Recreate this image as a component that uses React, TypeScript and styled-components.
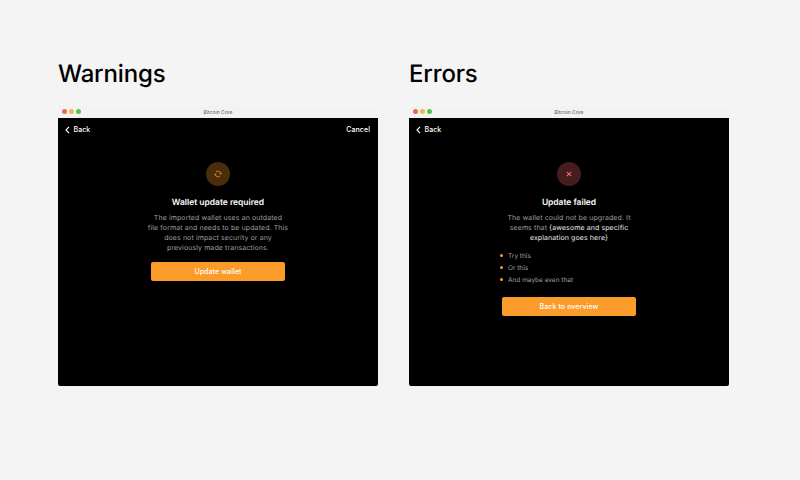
import React from "react";
import styled, { createGlobalStyle } from "styled-components";

const GlobalStyle = createGlobalStyle`
  * { box-sizing: border-box; }
  body {
    margin: 0;
    background: #f4f4f4;
    font-family: Inter, sans-serif;
    text-rendering: geometricPrecision;
    -webkit-font-smoothing: antialiased;
  }
`;
const Page = styled.main`
  display: flex;
  gap: 31px;
  width: 800px;
  height: 480px;
  padding: 59px 0 0 58px;
  background: #f4f4f4;
`;
const Column = styled.section`
  width: 320px;
`;
const Heading = styled.h1`
  margin: 0 0 17px;
  height: 30px;
  font-size: 24px;
  line-height: 30px;
  font-weight: 500;
  letter-spacing: -0.16px;
  color: #000;
`;
const Window = styled.div`
  height: 280px;
  display: flex;
  flex-direction: column;
  color: #fff;
`;
const Screen = styled.div`
  flex: 1;
  border-radius: 0 0 2px 2px;
  background: #000;
`;
const TitleBar = styled.div`
  display: grid;
  grid-template-columns: 1fr auto 1fr;
  align-items: center;
  height: 12px;
  padding: 0 4px;
  border-radius: 2px 2px 0 0;
  background: #f1f3f2;
  font-size: 5px;
  line-height: 6px;
  color: #4a4a4a;
`;
const WindowName = styled.span`
  padding-top: 1px;
`;
const Lights = styled.div`
  display: flex;
  gap: 2.2px;
  padding-bottom: 0.4px;
`;
const Light = styled.span<{ $color: string }>`
  width: 5px;
  height: 5px;
  border-radius: 50%;
  background: ${(p) => p.$color};
`;
const Nav = styled.nav`
  display: flex;
  justify-content: space-between;
  align-items: center;
  height: 24px;
  padding: 0 8px 0 7px;
`;
const NavButton = styled.button`
  display: flex;
  align-items: center;
  gap: 3.5px;
  padding: 0;
  border: 0;
  background: none;
  color: #fff;
  font: 500 7px/10px Inter, sans-serif;
  letter-spacing: 0.08px;
`;
const Content = styled.div`
  display: flex;
  flex-direction: column;
  align-items: center;
  padding-top: 20px;
`;
const Badge = styled.div<{ $color: string }>`
  display: flex;
  align-items: center;
  justify-content: center;
  width: 24px;
  height: 24px;
  border-radius: 50%;
  background: ${(p) => p.$color};
`;
const Title = styled.h2`
  margin: 11px 0 4px;
  font-size: 8.45px;
  line-height: 12px;
  font-weight: 600;
`;
const Copy = styled.p`
  margin: 0;
  font-size: 7px;
  line-height: 10px;
  letter-spacing: 0.1px;
  text-align: center;
  color: #9e9e9e;
  white-space: nowrap;
`;
const Strong = styled.span`
  color: #ececec;
`;
const Tips = styled.ul`
  width: 138px;
  margin: 7px 0 0;
  padding: 0;
  list-style: none;
`;
const Tip = styled.li`
  display: flex;
  align-items: center;
  gap: 5px;
  height: 12px;
  font-size: 6.5px;
  color: #9e9e9e;
  &::before {
    content: "";
    width: 3px;
    height: 3px;
    margin-top: -1px;
    border-radius: 50%;
    background: #fa9b2a;
  }
`;
const Action = styled.button<{ $top: number }>`
  width: 134px;
  height: 19px;
  margin-top: ${(p) => p.$top}px;
  padding: 0;
  border: 0;
  border-radius: 2px;
  background: #fa9b2a;
  color: #fff;
  font: 500 7px/10px Inter, sans-serif;
  letter-spacing: 0.1px;
`;

const Chrome = () => (
  <TitleBar>
    <Lights>
      <Light $color="#ec6559" />
      <Light $color="#f0b84c" />
      <Light $color="#5dc044" />
    </Lights>
    <WindowName>Bitcoin Core</WindowName>
  </TitleBar>
);

const Navigation = ({ cancel }: { cancel?: boolean }) => (
  <Nav>
    <NavButton>
      <svg width="5" height="8" viewBox="0 0 5 8" fill="none" stroke="#fff" strokeWidth="1.15">
        <path d="M4 .8 1 4l3 3.2" />
      </svg>
      Back
    </NavButton>
    {cancel && <NavButton>Cancel</NavButton>}
  </Nav>
);

export default function App() {
  return (
    <Page>
      <GlobalStyle />
      <Column>
        <Heading>Warnings</Heading>
        <Window>
          <Chrome />
          <Screen>
            <Navigation cancel />
            <Content>
              <Badge $color="#4b2d0b">
                <svg width="8" height="8" viewBox="0 0 8 8" fill="none" stroke="#f7931a">
                  <path d="M2 2A2.8 2.8 0 0 1 6.7 3.3M6 6A2.8 2.8 0 0 1 1.3 4.7" strokeWidth=".85" />
                  <path d="M0 4.7h2.6L1.3 3.2ZM5.4 3.3H8L6.7 4.8Z" fill="#f7931a" stroke="none" />
                </svg>
              </Badge>
              <Title>Wallet update required</Title>
              <Copy>
                The imported wallet uses an outdated<br />
                file format and needs to be updated. This<br />
                does not impact security or any<br />
                previously made transactions.
              </Copy>
              <Action $top={9}>Update wallet</Action>
            </Content>
          </Screen>
        </Window>
      </Column>
      <Column>
        <Heading>Errors</Heading>
        <Window>
          <Chrome />
          <Screen>
            <Navigation />
            <Content>
              <Badge $color="#471c1d">
                <svg width="6" height="6" viewBox="0 0 6 6" fill="none" stroke="#eb6a66" strokeWidth="1.1">
                  <path d="m.8.8 4.4 4.4M5.2.8.8 5.2" />
                </svg>
              </Badge>
              <Title>Update failed</Title>
              <Copy>
                The wallet could not be upgraded. It<br />
                seems that <Strong>{"{awesome and specific"}</Strong><br />
                <Strong>{"explanation goes here}"}</Strong>
              </Copy>
              <Tips>
                <Tip>Try this</Tip>
                <Tip>Or this</Tip>
                <Tip>And maybe even that</Tip>
              </Tips>
              <Action $top={11}>Back to overview</Action>
            </Content>
          </Screen>
        </Window>
      </Column>
    </Page>
  );
}
